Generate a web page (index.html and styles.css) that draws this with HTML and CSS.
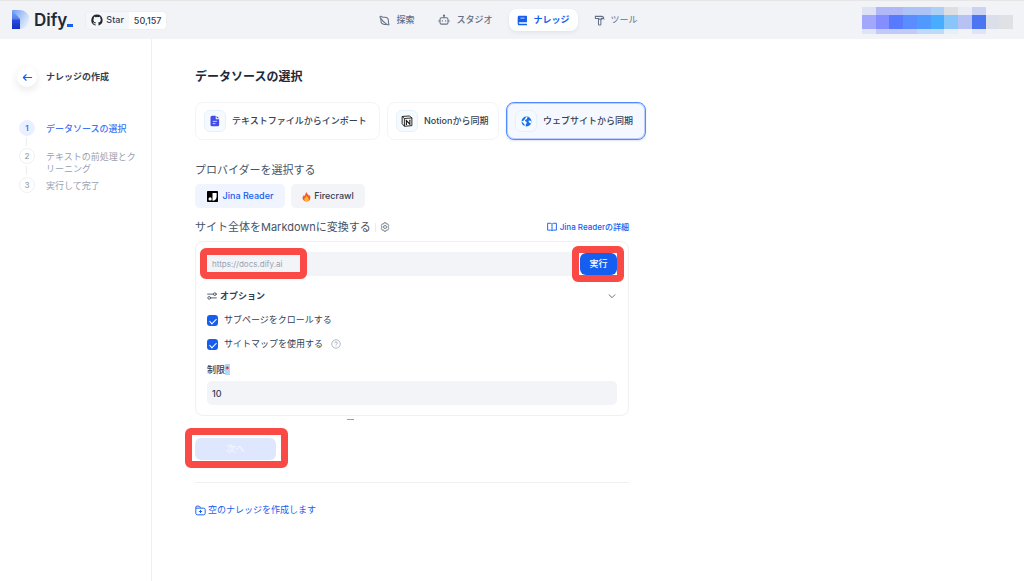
FILE: index.html
```html
<!DOCTYPE html>
<html lang="ja">
<head>
<meta charset="utf-8">
<meta name="viewport" content="width=device-width, initial-scale=1">
<title>ナレッジの作成 - Dify</title>
<link rel="stylesheet" href="styles.css">
</head>
<body>
<header class="topbar">
  <div class="brand">
    <a class="logo" href="#">
      <svg class="logo-mark" viewBox="0 0 18 20" aria-hidden="true">
        <defs>
          <linearGradient id="stem" x1="0" y1="0" x2="0" y2="1"><stop offset="0" stop-color="#7fa9f5"/><stop offset=".45" stop-color="#5580ee"/><stop offset=".55" stop-color="#2a4bdc"/><stop offset="1" stop-color="#1330c4"/></linearGradient>
          <linearGradient id="bowl" x1="0" y1="0" x2="1" y2=".6"><stop offset="0" stop-color="#6f9cf3"/><stop offset=".5" stop-color="#a9c6f8"/><stop offset="1" stop-color="#e6effb"/></linearGradient>
        </defs>
        <path d="M0 0h8a9.500 9.500 0 0 1 0 19z" fill="url(#bowl)"/>
        <path d="M0 0l8 9v10H0z" fill="url(#stem)"/>
      </svg>
      <span class="logo-text">Dify</span><span class="logo-bar"></span>
    </a>
    <a class="github" href="#">
      <span class="github-star">
        <svg class="icon-12" viewBox="0 0 16 16" aria-hidden="true"><path fill="#24292f" d="M8 .5a7.6 7.6 0 0 0-2.4 14.8c.4.1.5-.2.5-.4v-1.400c-2.100.5-2.600-1-2.600-1-.3-.9-.8-1.100-.8-1.100-.7-.5.1-.5.1-.5.8.1 1.200.8 1.200.8.7 1.200 1.800.9 2.200.7.1-.5.3-.9.5-1.100-1.700-.2-3.500-.8-3.500-3.700 0-.8.3-1.500.8-2-.1-.2-.3-1 .1-2 0 0 .6-.2 2.100.8a7 7 0 0 1 3.800 0c1.500-1 2.100-.8 2.100-.8.4 1 .2 1.800.1 2 .5.5.8 1.200.8 2 0 2.900-1.800 3.500-3.500 3.700.3.3.5.700.5 1.400v2.100c0 .2.1.5.5.4A7.600 7.600 0 0 0 8 .5z"/></svg>
        Star
      </span>
      <span class="github-count">50,157</span>
    </a>
  </div>
  <nav class="nav">
    <a class="nav-item" href="#">
      <svg class="icon-11" viewBox="0 0 16 16" fill="none" stroke="currentColor" stroke-width="1.500" stroke-linejoin="round" aria-hidden="true"><path d="M5 3.300h3.500A5.200 5.200 0 0 1 13.700 8.500V12M11.500 13.700H8A5.200 5.200 0 0 1 2.800 8.500V5"/><path d="M5 3.300C3.300 1.700 1.600 1.500 1.500 2.500S2 4.500 2.800 5.300c2 3.200 5.200 6.300 8.700 8.400 1.700 1 3.200 1 3.100-.2-.1-.8-.5-1.200-.9-1.800"/></svg>
      探索</a>
    <a class="nav-item" href="#">
      <svg class="icon-12" viewBox="0 0 16 16" fill="none" stroke="currentColor" stroke-width="1.400" aria-hidden="true"><rect x="2.700" y="5" width="10.600" height="8.500" rx="2"/><path d="M8 5V2.500M.3 9.300h2.400M13.300 9.300h2.400M5.900 8.300v1.600M10.100 8.300v1.600"/><circle cx="8" cy="2" r=".8"/></svg>
      スタジオ</a>
    <a class="nav-item nav-active" href="#" aria-current="page">
      <svg class="icon-11" viewBox="0 0 16 16" aria-hidden="true"><path fill="currentColor" d="M3.500 1h10c.600 0 1 .4 1 1v8.500H3.800c-.900 0-1.300.3-1.300 1.100 0 .7.500 1 1.300 1h10.700V15H3.300C2 15 1 14 1 12.700V3.500C1 2 2 1 3.500 1z"/><path stroke="#fff" d="M5 4.500h6"/></svg>
      ナレッジ</a>
    <a class="nav-item nav-muted" href="#">
      <svg class="icon-11" viewBox="0 0 16 16" fill="none" stroke="currentColor" stroke-width="1.500" aria-hidden="true"><path d="M2 2h9c1.800 0 3 1.200 3.300 3.500L11 5v1H6.500V5H2zM6.500 6v7.500c0 .6.300 1 1 1h1.400c.700 0 1.100-.4 1.100-1V6"/></svg>
      ツール</a>
  </nav>
  <div class="account" aria-hidden="true">
    <i class="c1"></i><i class="c2"></i><i class="c2"></i><i class="c3"></i><i class="c3"></i><i class="c4"></i><i class="c5"></i><i class="c6"></i><i class="c7"></i><i></i><i></i>
    <i class="m1"></i><i class="m2"></i><i class="m3"></i><i class="m4"></i><i class="m5"></i><i class="m6"></i><i class="m7"></i><i class="m8"></i><i class="m9"></i><i class="m10"></i><i class="m11"></i>
    <i class="b1"></i><i class="b2"></i><i class="b2"></i><i class="b2"></i><i class="b3"></i><i class="b3"></i><i class="b4"></i><i></i><i class="b1"></i><i></i><i></i>
  </div>
</header>
<div class="page">
  <aside class="sidebar">
    <div class="back-row">
      <button class="back" type="button" aria-label="戻る"><svg class="icon-11" viewBox="0 0 12 12" fill="none" stroke="#155eef" stroke-width="1.200" stroke-linecap="round" stroke-linejoin="round" aria-hidden="true"><path d="M10.500 6h-9M4.500 3l-3 3 3 3"/></svg></button>
      <h1 class="side-title">ナレッジの作成</h1>
    </div>
    <ol class="steps">
      <li class="step step-active"><span class="marker">1</span><span class="step-text">データソースの選択</span></li>
      <li class="step"><span class="marker">2</span><span class="step-text">テキストの前処理とクリーニング</span></li>
      <li class="step"><span class="marker">3</span><span class="step-text">実行して完了</span></li>
    </ol>
  </aside>
  <main class="main">
    <h2 class="title">データソースの選択</h2>
    <div class="sources">
      <button class="source source-file" type="button">
        <span class="source-icon"><svg class="icon-12" viewBox="0 0 16 16" aria-hidden="true"><path fill="#444ce7" d="M4 1h5v4.500h4.500V13a2 2 0 0 1-2 2H4a2 2 0 0 1-2-2V3a2 2 0 0 1 2-2zM10.200 1.200l3.200 3.200h-3.200z"/><path stroke="#fff" stroke-width="1" d="M5 8.500h5.500M5 11.500h3.500"/></svg></span>
        テキストファイルからインポート</button>
      <button class="source source-notion" type="button">
        <span class="source-icon"><svg class="icon-12" viewBox="0 0 16 16" aria-hidden="true"><path fill="#fff" stroke="#111" stroke-width="1.200" stroke-linejoin="round" d="M1.500 2l9.500-.7 3.500 2.500v10.400L4.500 15 1.500 11.500zM1.500 2l3 2.700V15M4.500 4.700l10-.8"/><path fill="none" stroke="#111" stroke-width="1.400" d="M7.200 12.500v-5l4.600 4.800v-5M6.300 7.200h1.300M11 7h1.700M6.400 12.500H8"/></svg></span>
        Notionから同期</button>
      <button class="source source-web source-selected" type="button" aria-pressed="true">
        <span class="source-icon"><svg class="icon-11" viewBox="0 0 16 16" aria-hidden="true"><circle cx="8" cy="8" r="7.200" fill="#1570ef"/><path fill="#fff" d="M8.300.7l1.200 2L7.800 5l-2 .8.4 1.900 1.800.8.3 2.200-1.500 1.700.2 2.900-1.500-.4-.6-3L3 9.700.8 8.500V7l2 .5L5 5.500 6.300 3z"/><path fill="#fff" d="M11.200 6.500l2.600.3 1.400 1.500-.6 2.500-1.900-.5-1.500-1.700z"/></svg></span>
        ウェブサイトから同期</button>
    </div>
    <div class="column">
      <h3 class="label provider-label">プロバイダーを選択する</h3>
      <div class="providers">
        <button class="provider provider-selected" type="button"><svg class="icon-11" viewBox="0 0 16 16" aria-hidden="true"><rect width="16" height="16" rx="1" fill="#000"/><circle cx="4.500" cy="11.500" r="2.300" fill="#fff"/><path fill="#fff" d="M8 3h6v5.500A5.500 5.500 0 0 1 8 14z"/></svg>Jina Reader</button>
        <button class="provider provider-fire" type="button"><svg class="flame" viewBox="0 0 10 12" aria-hidden="true"><path fill="#f9592c" d="M4.500.5c.5 2.500 3 3 3 5l.8-1.200C9.200 5.500 9.700 7 9 9c-.6 1.700-2.200 2.500-4 2.500S1.300 10.500.8 8.800C.3 6.800 1.200 5.500 2 4.500l.7 1.300C3 4 4.700 3 4.500.5z"/><path fill="#fdb62f" d="M5 5c.2 1.500 2.500 2.200 2.500 4.200S6.500 11.500 5 11.500s-2.600-1-2.500-2.400C2.600 7.700 4.800 7 5 5z"/></svg>Firecrawl</button>
      </div>
      <div class="label-row">
        <h3 class="label">サイト全体をMarkdownに変換する</h3>
        <span class="separator"></span>
        <button class="gear" type="button" aria-label="設定"><svg class="icon-10" viewBox="0 0 16 16" fill="none" stroke="#667085" stroke-width="1.400" stroke-linejoin="round" aria-hidden="true"><path d="M6.500 1.200h3l.6 1.900 2.300-.1 1.500 2.600L12.700 8l1.200 2.400-1.500 2.600-2.300-.1-.6 1.900h-3l-.6-1.900-2.300.1-1.500-2.600L3.300 8 2.100 5.600 3.600 3l2.300.1z"/><circle cx="8" cy="8" r="2.400"/></svg></button>
        <a class="details" href="#"><svg class="icon-10" viewBox="0 0 16 16" fill="none" stroke="currentColor" stroke-width="1.500" stroke-linejoin="round" aria-hidden="true"><path d="M8 3.500C7.500 2.500 6.500 2 5.300 2H1v11h4.700c1.300 0 2 .5 2.300 1.300.3-.8 1-1.300 2.300-1.300H15V2h-4.300C9.500 2 8.500 2.500 8 3.500zV14"/></svg>Jina Readerの詳細</a>
      </div>
      <form class="crawl">
        <div class="url-row">
          <div class="url-wrap"><input class="field url" type="text" placeholder="https://docs.dify.ai" aria-label="URL"><span class="mark mark-url"></span></div>
          <div class="run-wrap"><button class="run" type="button">実行</button><span class="mark mark-run"></span></div>
        </div>
        <button class="options" type="button" aria-expanded="true">
          <svg class="icon-10" viewBox="0 0 16 16" fill="none" stroke="#344054" stroke-width="1.300" stroke-linecap="round" aria-hidden="true"><path d="M1 5h9M6 11h9"/><circle cx="12.500" cy="5" r="2.200"/><circle cx="3.500" cy="11" r="2.200"/></svg>
          <span>オプション</span>
          <svg class="icon-10 chevron" viewBox="0 0 12 12" fill="none" stroke="#667085" stroke-width="1.200" stroke-linecap="round" stroke-linejoin="round" aria-hidden="true"><path d="M2.500 4.500L6 8l3.500-3.500"/></svg>
        </button>
        <label class="check"><input class="box" type="checkbox" checked>サブページをクロールする</label>
        <label class="check"><input class="box" type="checkbox" checked>サイトマップを使用する<svg class="icon-10 help" viewBox="0 0 16 16" fill="none" stroke="#98a2b3" stroke-width="1.200" aria-hidden="true"><circle cx="8" cy="8" r="6.800"/><path d="M6 6.400c0-2.600 4.100-2.500 4.100 0 0 1.500-2.100 1.500-2.100 3M8 10.600V12"/></svg></label>
        <label class="limit-label" for="limit">制限<span class="required">*</span></label>
        <input class="field limit" id="limit" type="text" value="10">
        <span class="dash"></span>
      </form>
      <div class="next-wrap"><button class="next" type="button" disabled>次へ</button><span class="mark mark-next"></span></div>
      <hr class="rule">
      <a class="empty" href="#"><svg class="icon-11" viewBox="0 0 16 16" fill="none" stroke="currentColor" stroke-width="1.400" stroke-linejoin="round" aria-hidden="true"><path d="M1.200 5V3c0-.8.500-1.300 1.300-1.300h3.300c.6 0 1 .3 1.300.8l1 2.100h4.600c1.200 0 2.100.9 2.100 2.100v5.500c0 1.200-.9 2.100-2.100 2.100H3.300c-1.200 0-2.100-.9-2.100-2.100zM1.200 4.600h7M8 7.200v4.600M5.700 9.500h4.600"/></svg>空のナレッジを作成します</a>
    </div>
  </main>
</div>
</body>
</html>
```
FILE: styles.css
```css
* { box-sizing: border-box; }
body {
  margin: 0;
  min-height: 100vh;
  display: flex;
  flex-direction: column;
  background: #fff;
  color: #344054;
  font: 400 9px/12px Inter, "Noto Sans CJK JP", sans-serif;
}
button, input { font: inherit; color: inherit; margin: 0; }
button { border: 0; background: none; padding: 0; }
a { color: inherit; text-decoration: none; }
h1, h2, h3, ol { margin: 0; padding: 0; font-weight: 400; }
svg { flex: none; display: block; }
.icon-10 { width: 10px; height: 10px; }
.icon-11 { width: 11px; height: 11px; }
.icon-12 { width: 12px; height: 12px; }

.topbar {
  display: grid;
  grid-template-columns: 1fr auto 1fr;
  align-items: center;
  height: 39px;
  padding: 0 11px 0 12px;
  background: #f2f3f7;
  border-top: 1px solid #e6e6e6;
}
.brand, .logo, .github, .github-star, .nav, .nav-item { display: flex; align-items: center; }
.brand { gap: 12px; }
.logo-mark { width: 18px; height: 20px; margin-right: 4px; }
.logo-text { font-size: 17px; line-height: 20px; font-weight: 600; color: #1d2939; }
.logo-bar { align-self: flex-end; width: 6px; height: 3px; margin-bottom: 3px; background: #155eef; }
.github {
  border: 1px solid #eceef2;
  border-radius: 5px;
  font-weight: 500;
  overflow: hidden;
}
.github-star { gap: 3px; height: 17px; padding: 0 5px; background: #f5f6f9; }
.github-count { padding: 0 5px; line-height: 17px; background: #fff; }
.nav { gap: 8px; margin-right: 8px; }
.nav-item {
  gap: 6px;
  height: 22px;
  padding: 0 8px;
  border-radius: 8px;
  font-weight: 500;
  color: #667085;
}
.nav-active {
  background: #fff;
  color: #155eef;
  font-weight: 700;
  box-shadow: 0 2px 4px rgba(16, 24, 40, .06);
}
.nav-muted { font-weight: 400; }
.account {
  justify-self: end;
  display: grid;
  grid-template-columns: repeat(11, 1fr);
  grid-template-rows: 8px 14px 5px;
  width: 151px;
}
.c1 { background: #dde1f5; } .c2 { background: #b0b8f8; } .c3 { background: #acc3f7; }
.c4 { background: #add0f6; } .c5 { background: #dedfe2; } .c6 { background: #e9ebf5; } .c7 { background: #cad3f4; }
.m1 { background: #a1a7fb; } .m2 { background: #858eff; } .m3 { background: #587aff; }
.m4 { background: #5a8dff; } .m5 { background: #5099ff; } .m6 { background: #48adff; }
.m7 { background: #88c6fa; } .m8 { background: #b7c1f3; } .m9 { background: #4c76f1; }
.m10 { background: #dadfe9; } .m11 { background: #dfe1e5; }
.b1 { background: #dfe4f6; } .b2 { background: #c2caf8; } .b3 { background: #bddaf9; } .b4 { background: #e7f0f8; }

.page { flex: 1; display: flex; }
.sidebar { width: 152px; flex: none; padding: 28px 16px 0 17px; border-right: 1px solid #eef0f3; }
.back-row { display: flex; align-items: center; gap: 9px; }
.back {
  display: grid;
  place-items: center;
  width: 20px;
  height: 20px;
  border-radius: 50%;
  background: #fff;
  box-shadow: 0 3px 8px rgba(16, 24, 40, .1);
}
.side-title { font-size: 9px; font-weight: 600; }
.steps { list-style: none; margin: 33px 0 0 2px; }
.step { position: relative; display: flex; gap: 11px; min-height: 28px; color: #98a2b3; }
.step:not(:last-child)::after {
  content: "";
  position: absolute;
  left: 7px;
  top: 18px;
  width: 1px;
  height: 8px;
  background: #eaecf0;
}
.marker {
  flex: none;
  width: 16px;
  height: 16px;
  border: 1px solid #f0f1f4;
  border-radius: 50%;
  font-size: 8px;
  line-height: 14px;
  font-weight: 500;
  text-align: center;
}
.step-text { padding-top: 3px; margin-right: -6px; padding-bottom: 2px; }
.step-active { color: #3b76f6; font-weight: 500; }
.step-active .marker { background: #eaf0ff; border-color: #eaf0ff; font-weight: 600; }

.main { flex: 1; min-width: 0; padding: 30px 43px; }
.title { font-size: 12px; line-height: 16px; font-weight: 700; color: #1d2939; }
.sources { display: flex; gap: 7px; margin-top: 17px; }
.source {
  display: flex;
  align-items: center;
  gap: 6px;
  height: 38px;
  padding: 0 8px;
  border: 1px solid #f2f4f7;
  border-radius: 8px;
  font-weight: 500;
  white-space: nowrap;
  color: #344054;
}
.source-file { min-width: 185px; }
.source-notion { min-width: 112px; }
.source-web { min-width: 140px; }
.source-icon {
  display: grid;
  place-items: center;
  width: 22px;
  height: 22px;
  border: 1px solid #e6f1fc;
  border-radius: 6px;
  background: #f5faff;
}
.source-selected { border-color: #528bff; background: #f5f8ff; box-shadow: 0 1px 2px rgba(16, 24, 40, .12), inset 0 0 0 1px #bcd0ff; }

.column { max-width: 434px; }
.label { font-size: 11px; line-height: 16px; color: #475467; }
.provider-label { margin-top: 22px; }
.providers { display: flex; gap: 6px; margin-top: 6px; }
.provider {
  display: flex;
  align-items: center;
  justify-content: center;
  gap: 5px;
  height: 24px;
  padding: 0 10px;
  border-radius: 5px;
  background: #f2f4f7;
  font-size: 9px;
  font-weight: 500;
}
.provider-selected { min-width: 90px; background: #eff4ff; color: #155eef; }
.provider-fire { min-width: 74px; gap: 3px; }
.flame { width: 9px; height: 11px; }
.label-row { display: flex; align-items: center; margin-top: 11px; }
.separator { width: 1px; height: 9px; margin: 0 4px; background: #eaecf0; }
.details { display: flex; align-items: center; gap: 3px; margin-left: auto; color: #155eef; font-size: 8px; font-weight: 500; }

.crawl {
  position: relative;
  display: flex;
  flex-direction: column;
  margin-top: 6px;
  padding: 10px 11px;
  border: 1px solid #eef0f3;
  border-radius: 8px;
}
.field {
  display: block;
  width: 100%;
  height: 24px;
  padding: 0 5px;
  border: 0;
  border-radius: 5px;
  background: #f2f4f7;
}
.url-row { display: flex; align-items: center; }
.url-wrap { position: relative; flex: 1; }
.url { font-size: 8px; }
.url::placeholder { color: #98a2b3; opacity: 1; }
.run-wrap { position: relative; padding-left: 3px; }
.run { display: block; width: 37px; height: 22px; border-radius: 6px; background: #155eef; color: #fff; font-weight: 500; }
.mark { position: absolute; border: 7px solid #f94a45; border-radius: 6px; pointer-events: none; }
.mark-url { left: -7px; top: -4px; width: 107px; height: 31px; }
.mark-run { inset: -7px -7px -7px -5px; }
.mark-next { inset: -10px -12px -8px -10px; }
.options { display: flex; align-items: center; gap: 3px; height: 16px; margin-top: 12px; font-weight: 700; }
.chevron { margin-left: auto; }
.check { display: flex; align-items: center; gap: 6px; height: 16px; margin-top: 8px; }
.help { margin-left: 2px; }
.box {
  appearance: none;
  position: relative;
  width: 11px;
  height: 11px;
  border-radius: 3px;
  background: #155eef;
}
.box::after {
  content: "";
  position: absolute;
  left: 4px;
  top: 2px;
  width: 3px;
  height: 6px;
  border: solid #fff;
  border-width: 0 1px 1px 0;
  transform: rotate(45deg);
}
.limit-label { margin-top: 12px; font-weight: 500; }
.required { background: #b5d7fb; color: #d92d20; }
.limit { margin-top: 5px; font-weight: 500; }
.dash { position: absolute; left: 151px; bottom: -5px; width: 7px; height: 1px; background: #e5837f; }

.next-wrap { position: relative; width: 81px; margin-top: 22px; }
.next { display: block; width: 100%; height: 22px; border-radius: 6px; background: #dfe7ff; color: #f4f7ff; font-weight: 500; }
.rule { margin: 22px 0 21px; border: 0; border-top: 1px solid #eef0f3; }
.empty { display: inline-flex; align-items: center; gap: 2px; color: #155eef; }
```
